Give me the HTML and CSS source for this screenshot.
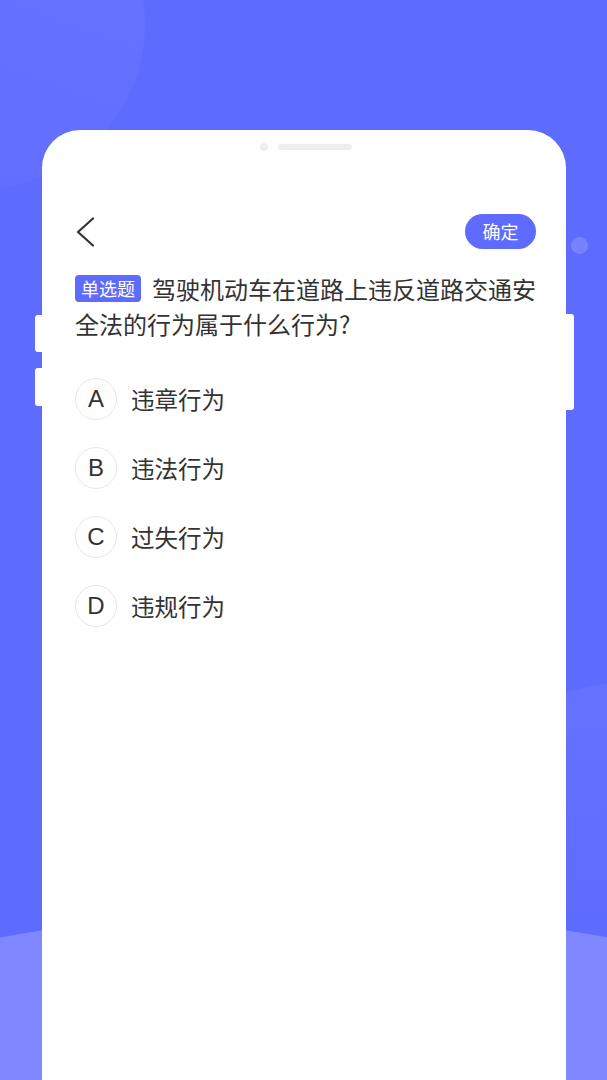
FILE: index.html
```html
<!DOCTYPE html>
<html lang="zh-CN">
<head>
<meta charset="utf-8">
<title>单选题</title>
<link rel="stylesheet" href="styles.css">
</head>
<body>
<div class="stage">
  <div class="bg-circle bg-tl"></div>
  <div class="bg-circle bg-r"></div>
  <div class="bg-circle bg-bottom"></div>
  <div class="bg-dot"></div>
  <div class="side-btn side-l1"></div>
  <div class="side-btn side-l2"></div>
  <div class="side-btn side-r1"></div>

  <div class="card">
    <div class="notch">
      <span class="notch-dot"></span>
      <span class="notch-bar"></span>
    </div>

    <div class="header">
      <div class="back">
        <svg width="18" height="30" viewBox="0 0 18 30"><polyline points="17,1.5 2,15 17,28.5" fill="none" stroke="#333" stroke-width="2.2" stroke-linecap="round" stroke-linejoin="round"/></svg>
      </div>
      <div class="confirm">确定</div>
    </div>

    <div class="question">
      <div class="q-line"><span class="tag">单选题</span><span class="q-text">驾驶机动车在道路上违反道路交通安</span></div>
      <div class="q-line"><span class="q-text">全法的行为属于什么行为?</span></div>
    </div>

    <div class="options">
      <div class="option"><span class="letter">A</span><span class="opt-text">违章行为</span></div>
      <div class="option"><span class="letter">B</span><span class="opt-text">违法行为</span></div>
      <div class="option"><span class="letter">C</span><span class="opt-text">过失行为</span></div>
      <div class="option"><span class="letter">D</span><span class="opt-text">违规行为</span></div>
    </div>
  </div>
</div>
</body>
</html>
```

FILE: styles.css
```css
html, body {
  margin: 0;
  padding: 0;
}
body {
  background: #5e6bff;
  font-family: "Noto Sans CJK SC", "Noto Sans", sans-serif;
  color: #333;
}
.stage {
  position: relative;
  width: 607px;
  height: 1080px;
  overflow: hidden;
  padding-top: 130px;
  box-sizing: border-box;
}
.bg-circle {
  position: absolute;
  border-radius: 50%;
}
.bg-tl {
  left: -200px;
  top: -140px;
  width: 345px;
  height: 330px;
  background: linear-gradient(200deg, rgba(255,255,255,0.06), rgba(255,255,255,0.015));
}
.bg-r {
  left: 370px;
  top: 680px;
  width: 560px;
  height: 560px;
  background: linear-gradient(180deg, rgba(255,255,255,0.05), rgba(255,255,255,0.0) 45%);
}
.bg-bottom {
  left: -1396px;
  top: 910px;
  width: 3400px;
  height: 3400px;
  background: #8088ff;
}
.bg-dot {
  position: absolute;
  left: 571px;
  top: 237px;
  width: 17px;
  height: 17px;
  border-radius: 50%;
  background: rgba(255,255,255,0.16);
}
.side-btn {
  position: absolute;
  background: #fff;
}
.side-l1 {
  left: 35px;
  top: 315px;
  width: 10px;
  height: 37px;
  border-radius: 3px 0 0 3px;
}
.side-l2 {
  left: 35px;
  top: 368px;
  width: 10px;
  height: 38px;
  border-radius: 3px 0 0 3px;
}
.side-r1 {
  left: 563px;
  top: 314px;
  width: 11px;
  height: 96px;
  border-radius: 0 3px 3px 0;
}
.card {
  position: relative;
  z-index: 1;
  margin-left: 42px;
  width: 524px;
  height: 950px;
  background: #fff;
  border-radius: 38px 38px 0 0;
  padding: 13px 30px 0 33px;
  box-sizing: border-box;
}
.notch {
  display: flex;
  justify-content: center;
  align-items: center;
  gap: 10px;
  height: 8px;
}
.notch-dot {
  width: 8px;
  height: 8px;
  border-radius: 50%;
  background: #eeeeee;
}
.notch-bar {
  width: 74px;
  height: 6px;
  border-radius: 3px;
  background: #eeeeee;
}
.header {
  margin-top: 63px;
  height: 35px;
  display: flex;
  align-items: center;
  justify-content: space-between;
}
.back {
  display: flex;
  align-items: center;
  padding-left: 1px;
  height: 30px;
}
.confirm {
  width: 71px;
  height: 35px;
  border-radius: 18px;
  background: #5f6bff;
  color: #fff;
  font-size: 18px;
  line-height: 35px;
  text-align: center;
}
.question {
  margin-top: 22px;
  font-size: 24px;
  line-height: 35px;
  color: #333;
}
.q-line {
  display: flex;
  align-items: center;
  height: 35px;
  white-space: nowrap;
}
.tag {
  flex: none;
  margin-right: 11px;
  height: 27px;
  line-height: 27px;
  padding: 0 6px;
  font-size: 18px;
  color: #fff;
  background: #5f6bff;
  border-radius: 4px;
}
.options {
  margin-top: 37px;
  display: flex;
  flex-direction: column;
  gap: 27px;
}
.option {
  display: flex;
  align-items: center;
  height: 42px;
}
.letter {
  width: 42px;
  height: 42px;
  box-sizing: border-box;
  border: 1px solid #e6e6e6;
  border-radius: 50%;
  display: flex;
  align-items: center;
  justify-content: center;
  font-family: "Liberation Sans", "Noto Sans", sans-serif;
  font-size: 24px;
  color: #333;
}
.opt-text {
  margin-left: 14px;
  font-size: 23.5px;
  color: #333;
}
```
